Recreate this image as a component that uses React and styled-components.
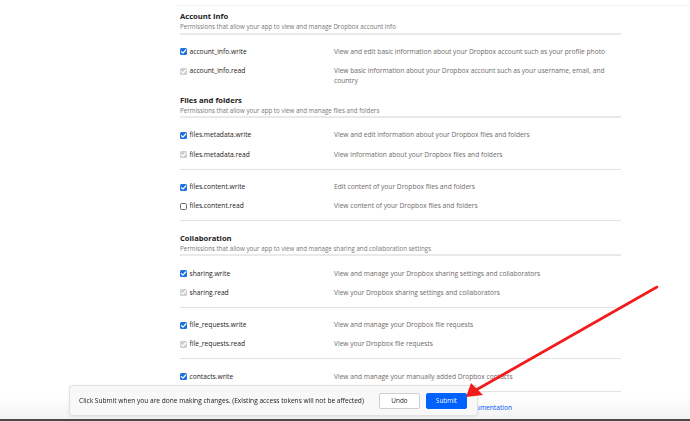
import React from "react";
import styled, { createGlobalStyle } from "styled-components";

const sections = [
  {
    title: "Account Info",
    subtitle: "Permissions that allow your app to view and manage Dropbox account info",
    groups: [
      {
        divided: false,
        rows: [
          { scope: "account_info.write", state: "on", desc: "View and edit basic information about your Dropbox account such as your profile photo" },
          { scope: "account_info.read", state: "locked", desc: "View basic information about your Dropbox account such as your username, email, and country" },
        ],
      },
    ],
  },
  {
    title: "Files and folders",
    subtitle: "Permissions that allow your app to view and manage files and folders",
    groups: [
      {
        divided: true,
        rows: [
          { scope: "files.metadata.write", state: "on", desc: "View and edit information about your Dropbox files and folders" },
          { scope: "files.metadata.read", state: "locked", desc: "View information about your Dropbox files and folders" },
        ],
      },
      {
        divided: true,
        rows: [
          { scope: "files.content.write", state: "on", desc: "Edit content of your Dropbox files and folders" },
          { scope: "files.content.read", state: "off", desc: "View content of your Dropbox files and folders" },
        ],
      },
    ],
  },
  {
    title: "Collaboration",
    subtitle: "Permissions that allow your app to view and manage sharing and collaboration settings",
    groups: [
      {
        divided: true,
        rows: [
          { scope: "sharing.write", state: "on", desc: "View and manage your Dropbox sharing settings and collaborators" },
          { scope: "sharing.read", state: "locked", desc: "View your Dropbox sharing settings and collaborators" },
        ],
      },
      {
        divided: true,
        rows: [
          { scope: "file_requests.write", state: "on", desc: "View and manage your Dropbox file requests" },
          { scope: "file_requests.read", state: "locked", desc: "View your Dropbox file requests" },
        ],
      },
      {
        divided: true,
        rows: [
          { scope: "contacts.write", state: "on", desc: "View and manage your manually added Dropbox contacts" },
        ],
      },
    ],
  },
];

const GlobalStyle = createGlobalStyle`
  html, body {
    margin: 0;
    padding: 0;
    background: #ffffff;
    overflow: hidden;
  }
  body {
    font-family: "Open Sans", "Liberation Sans", sans-serif;
    color: #1e1919;
  }
`;

const Check = ({ state }) => (
  <Box $state={state}>
    {state !== "off" && (
      <svg width="7" height="7" viewBox="0 0 10 10">
        <path d="M2 5.2 L4.2 7.3 L8.2 2.8" fill="none" stroke="#fff" strokeWidth="1.8" strokeLinecap="round" strokeLinejoin="round" />
      </svg>
    )}
  </Box>
);

const Arrow = () => (
  <ArrowLayer viewBox="0 0 690 421">
    <line x1="657" y1="287" x2="476" y2="390" stroke="#f21c1c" strokeWidth="2.6" strokeLinecap="round" />
    <polygon points="466,397 471,383 483,395" fill="#f21c1c" />
  </ArrowLayer>
);

export default function App() {
  return (
    <>
      <GlobalStyle />
      <Page>
        <TopRule />
        <Column>
          {sections.map((section) => (
            <Section key={section.title}>
              <Title>{section.title}</Title>
              <Subtitle>{section.subtitle}</Subtitle>
              <SectionRule />
              {section.groups.map((group, i) => (
                <Group key={i} $divided={group.divided}>
                  {group.rows.map((row) => (
                    <Row key={row.scope}>
                      <Scope>
                        <Check state={row.state} />
                        {row.scope}
                      </Scope>
                      <Desc>{row.desc}</Desc>
                    </Row>
                  ))}
                </Group>
              ))}
            </Section>
          ))}
          <DocRow>
            <DocLink>Documentation</DocLink>
          </DocRow>
        </Column>
      </Page>

      <BottomFade />
      <ChangeBar>
        <BarText>
          Click Submit when you are done making changes. (Existing access tokens will not be affected)
        </BarText>
        <Button>Undo</Button>
        <Button $primary>Submit</Button>
      </ChangeBar>
      <Arrow />
    </>
  );
}

const Page = styled.div`
  padding-top: 5px;
`;

const TopRule = styled.div`
  margin-left: 176px;
  border-top: 1px solid #f3f3f3;
`;

const Column = styled.div`
  width: 441px;
  margin-left: 180px;
  padding-top: 5px;
  display: flex;
  flex-direction: column;
`;

const Section = styled.section`
  display: flex;
  flex-direction: column;
  & + & {
    margin-top: 8.5px;
  }
`;

const Title = styled.div`
  font-size: 7.6px;
  font-weight: 700;
  line-height: 11px;
  color: #1e1919;
`;

const Subtitle = styled.div`
  font-size: 6.2px;
  line-height: 9px;
  color: #7b7676;
`;

const SectionRule = styled.div`
  height: 2px;
  margin-top: 1.5px;
  background: #e9e9e9;
`;

const Group = styled.div`
  display: flex;
  flex-direction: column;
  gap: 9.2px;
  padding-top: 12.4px;
  padding-bottom: ${(p) => (p.$divided ? "9px" : "0")};
  border-bottom: ${(p) => (p.$divided ? "1px solid #e3e3e3" : "none")};
  &:last-child {
    margin-bottom: ${(p) => (p.$divided ? "3px" : "0")};
  }
`;

const Row = styled.div`
  display: grid;
  grid-template-columns: 154px 1fr;
  align-items: start;
  line-height: 10px;
  padding-right: 10px;
`;

const Scope = styled.div`
  display: flex;
  align-items: center;
  gap: 2.5px;
  font-size: 6.7px;
  color: #1e1919;
  white-space: nowrap;
`;

const Box = styled.span`
  width: 7px;
  height: 7px;
  box-sizing: border-box;
  border-radius: 1.5px;
  display: inline-flex;
  align-items: center;
  justify-content: center;
  flex-shrink: 0;
  background: ${(p) =>
    p.$state === "on" ? "#1a6fe3" : p.$state === "locked" ? "#cfcfcf" : "#ffffff"};
  border: ${(p) => (p.$state === "off" ? "1px solid #6e6e6e" : "none")};
`;

const Desc = styled.div`
  font-size: 6.65px;
  color: #6f6a6a;
`;

const DocRow = styled.div`
  display: flex;
  justify-content: flex-end;
  width: 332px;
  margin-top: 8px;
  line-height: 10px;
  font-size: 6.65px;
`;

const DocLink = styled.span`
  color: #0061fe;
`;

const BottomFade = styled.div`
  position: fixed;
  left: 0;
  right: 0;
  bottom: 0;
  height: 22px;
  background: linear-gradient(to bottom, rgba(0, 0, 0, 0), rgba(0, 0, 0, 0.05));
  border-bottom: 2px solid #4a4a4a;
  pointer-events: none;
`;

const ChangeBar = styled.div`
  position: fixed;
  left: 69px;
  bottom: 5px;
  width: 409px;
  height: 31px;
  box-sizing: border-box;
  padding: 0 10px 0 9px;
  display: flex;
  align-items: center;
  gap: 6px;
  background: #f8f8f8;
  border: 1px solid #e1e1e1;
  border-radius: 3px;
  box-shadow: 0 1px 3px rgba(0, 0, 0, 0.08);
`;

const BarText = styled.div`
  flex: 1;
  font-size: 6.6px;
  color: #1e1919;
  white-space: nowrap;
`;

const Button = styled.button`
  width: 41px;
  height: 16px;
  padding: 0;
  box-sizing: border-box;
  border-radius: 2px;
  font-family: "Open Sans", "Liberation Sans", sans-serif;
  font-size: 6.4px;
  color: ${(p) => (p.$primary ? "#ffffff" : "#1e1919")};
  background: ${(p) => (p.$primary ? "#0061fe" : "#ffffff")};
  border: 1px solid ${(p) => (p.$primary ? "#0061fe" : "#cfcfcf")};
`;

const ArrowLayer = styled.svg`
  position: fixed;
  left: 0;
  top: 0;
  width: 690px;
  height: 421px;
  pointer-events: none;
`;
